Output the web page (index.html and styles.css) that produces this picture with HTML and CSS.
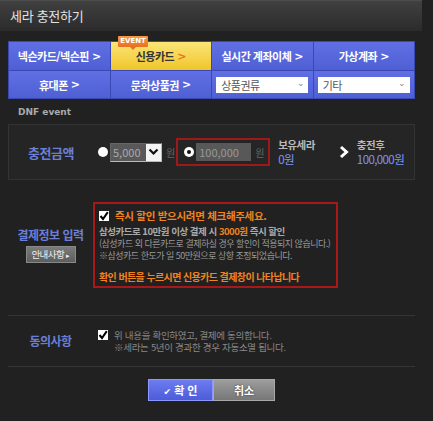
FILE: index.html
```html
<!DOCTYPE html>
<html lang="ko">
<head>
<meta charset="utf-8">
<title>세라 충전하기</title>
<link rel="stylesheet" href="styles.css">
</head>
<body>
<div class="win">
  <div class="titlebar">세라 충전하기</div>
  <div class="content">
    <div class="tabs-wrap">
      <div class="event-badge">EVENT</div>
      <div class="tabs">
        <div class="tab">넥슨카드/넥슨핀 <span class="chev">&gt;</span></div>
        <div class="tab active">신용카드 <span class="chev">&gt;</span></div>
        <div class="tab">실시간 계좌이체 <span class="chev">&gt;</span></div>
        <div class="tab">가상계좌 <span class="chev">&gt;</span></div>
        <div class="tab">휴대폰 <span class="chev">&gt;</span></div>
        <div class="tab">문화상품권 <span class="chev">&gt;</span></div>
        <div class="tab"><div class="sel"><span>상품권류</span><span class="sel-arrow">⌄</span></div></div>
        <div class="tab"><div class="sel"><span>기타</span><span class="sel-arrow">⌄</span></div></div>
      </div>
    </div>

    <div class="dnf">DNF event</div>

    <div class="amount-box">
      <div class="amount-label">충전금액</div>
      <span class="radio"></span>
      <div class="amt-select"><span class="amt-val">5,000</span><span class="amt-btn"><svg width="11" height="8" viewBox="0 0 11 8"><path d="M1.5 1.5 L5.5 5.5 L9.5 1.5" fill="none" stroke="#111" stroke-width="2.2"/></svg></span></div>
      <span class="won dim">원</span>
      <div class="red-sel">
        <span class="radio on"></span>
        <div class="amt-input">100,000</div>
        <span class="won dim">원</span>
      </div>
      <div class="info">
        <div class="info-t">보유세라</div>
        <div class="info-v">0원</div>
      </div>
      <svg class="arrow" width="10" height="14" viewBox="0 0 10 14"><path d="M2 2 L7.5 7 L2 12" fill="none" stroke="#fff" stroke-width="3"/></svg>
      <div class="info">
        <div class="info-t">충전후</div>
        <div class="info-v">100,000원</div>
      </div>
    </div>

    <div class="pay-section">
      <div class="side">
        <div class="side-label">결제정보 입력</div>
        <div class="guide-btn">안내사항 <span class="tri">▸</span></div>
      </div>
      <div class="notice">
        <div class="notice-head"><span class="chk"><svg width="10" height="10" viewBox="0 0 10 10"><path d="M1.5 5 L4 8 L8.8 1.2" fill="none" stroke="#000" stroke-width="2"/></svg></span><span class="orange b">즉시 할인 받으시려면 체크해주세요.</span></div>
        <div class="n-line b">삼성카드로 10만원 이상 결제 시 <span class="orange">3000원</span> 즉시 할인</div>
        <div class="n-line">(삼성카드 외 다른카드로 결제하실 경우 할인이 적용되지 않습니다.)</div>
        <div class="n-line">※삼성카드 한도가 일 50만원으로 상향 조정되었습니다.</div>
        <div class="n-line orange b last">확인 버튼을 누르시면 신용카드 결제창이 나타납니다</div>
      </div>
    </div>

    <div class="sep"></div>

    <div class="agree">
      <div class="side"><div class="side-label">동의사항</div></div>
      <div class="agree-body">
        <span class="chk"><svg width="10" height="10" viewBox="0 0 10 10"><path d="M1.5 5 L4 8 L8.8 1.2" fill="none" stroke="#000" stroke-width="2"/></svg></span>
        <div class="agree-text">
          <div>위 내용을 확인하였고, 결제에 동의합니다.</div>
          <div>※세라는 5년이 경과한 경우 자동소멸 됩니다.</div>
        </div>
      </div>
    </div>

    <div class="sep"></div>

    <div class="buttons">
      <div class="btn ok"><span class="ok-chk">✔</span> 확 인</div>
      <div class="btn cancel">취소</div>
    </div>
  </div>
</div>
</body>
</html>
```

FILE: styles.css
```css
* { box-sizing: border-box; }
html, body { margin: 0; padding: 0; }
body {
  background: #212121;
  font-family: "Noto Sans CJK KR", "Noto Sans", sans-serif;
  font-size: 11px;
  color: #999;
  width: 433px;
  height: 421px;
  overflow: hidden;
  white-space: nowrap;
}
.win { width: 422px; }
.titlebar {
  height: 31px;
  background: linear-gradient(#404040, #2b2b2b);
  border-top: 1px solid #4d4d4d;
  color: #e2e2e2;
  font-size: 13px;
  line-height: 30px;
  padding-left: 10px;
  letter-spacing: -0.3px;
}
.content { padding: 0 7px 0 8px; }

.tabs-wrap { position: relative; margin-top: 10px; }
.event-badge {
  position: absolute;
  left: 110px;
  top: -5px;
  width: 30px;
  height: 11px;
  background: linear-gradient(#f79a4a, #e8701f);
  color: #fff;
  font-family: "DejaVu Sans", sans-serif;
  font-size: 7px;
  font-weight: bold;
  line-height: 11px;
  text-align: center;
  border-radius: 1px;
  z-index: 2;
}
.event-badge::after {
  content: "";
  position: absolute;
  left: 12px;
  top: 11px;
  border: 3px solid transparent;
  border-top: 3px solid #e8701f;
}
.tabs {
  display: grid;
  grid-template-columns: repeat(4, 1fr);
  grid-template-rows: 28px 27px;
  gap: 1px;
  background: #3a48b4;
  border: 1px solid #3a48b4;
  width: 407px;
}
.tab {
  background: linear-gradient(#6070e4, #4f5fd4);
  color: #fff;
  font-weight: bold;
  font-size: 11px;
  display: flex;
  align-items: center;
  justify-content: center;
  letter-spacing: -0.5px;
  gap: 3px;
}
.tab .chev { font-family: "DejaVu Sans", sans-serif; font-size: 11px; }
.tab.active {
  background: linear-gradient(#fbe577, #f0c52a);
  color: #333;
}
.tab.active .chev { color: #e8761e; }
.sel {
  width: 92px;
  height: 16px;
  background: #fff;
  color: #555;
  font-weight: normal;
  font-size: 11px;
  display: flex;
  justify-content: space-between;
  align-items: center;
  padding: 0 4px 0 5px;
  line-height: 16px;
}
.sel-arrow { color: #888; font-size: 9px; line-height: 10px; padding-bottom: 4px; }

.dnf {
  margin: 7px 0 0 10px;
  font-family: "DejaVu Sans", sans-serif;
  font-size: 9px;
  font-weight: bold;
  color: #aaa;
  line-height: 13px;
}

.amount-box {
  margin-top: 5px;
  height: 56px;
  width: 407px;
  border: 1px solid #333;
  background: #252525;
  display: flex;
  align-items: center;
}
.amount-label {
  width: 70px;
  margin-left: 19px;
  color: #6a7fd8;
  font-size: 13px;
  font-weight: bold;
  letter-spacing: -0.5px;
}
.radio {
  width: 10px;
  height: 10px;
  border-radius: 50%;
  background: #fff;
  display: inline-block;
  flex: none;
  position: relative;
}
.radio.on::after {
  content: "";
  position: absolute;
  left: 3px; top: 3px;
  width: 4px; height: 4px;
  border-radius: 50%;
  background: #111;
}
.amt-select {
  margin-left: 2px;
  width: 52px;
  height: 19px;
  display: flex;
  flex: none;
  border: 1px solid #bbb;
  border-top-color: #666;
  border-left-color: #666;
}
.amt-val {
  flex: 1;
  background: #595959;
  color: #aaa;
  font-size: 11px;
  line-height: 17px;
  padding-left: 2px;
}
.amt-btn {
  width: 15px;
  background: #f4f4f4;
  display: flex;
  align-items: center;
  justify-content: center;
}
.won { margin-left: 4px; font-size: 10px; }
.dim { color: #666; }
.red-sel {
  margin-left: 1px;
  width: 94px;
  height: 28px;
  flex: none;
  border: 2px solid #9e1a1a;
  display: flex;
  align-items: center;
  padding-left: 6px;
}
.amt-input {
  margin-left: 2px;
  width: 55px;
  height: 18px;
  background: #585858;
  color: #999;
  font-size: 11px;
  line-height: 18px;
  padding-left: 3px;
}
.info { margin-left: 8px; line-height: 15px; flex: none; }
.info-t { color: #bbb; font-weight: bold; font-size: 10.5px; letter-spacing: -0.5px; }
.info-v { color: #7d98f6; font-size: 11.5px; letter-spacing: -0.6px; }
.arrow { margin: 0 8px 0 24px; flex: none; }
.arrow + .info { margin-left: 0; }

.pay-section {
  display: flex;
  align-items: center;
  padding: 22px 0 27px;
}
.side {
  width: 85px;
  display: flex;
  flex-direction: column;
  align-items: center;
  gap: 3px;
  flex: none;
}
.side-label {
  color: #6a7fd8;
  font-size: 12px;
  font-weight: bold;
  letter-spacing: -0.5px;
  line-height: 16px;
}
.guide-btn {
  width: 50px;
  height: 17px;
  background: linear-gradient(#7a7a7a, #5e5e5e);
  border: 1px solid #888;
  color: #eee;
  font-size: 9.5px;
  line-height: 15px;
  text-align: center;
  letter-spacing: -0.6px;
}
.guide-btn .tri { font-size: 7px; }
.notice {
  width: 245px;
  height: 86px;
  border: 2px solid #a81818;
  padding: 5px 0 0 4px;
  font-size: 9px;
  line-height: 12px;
  letter-spacing: -0.5px;
  color: #999;
}
.notice-head { display: flex; align-items: center; gap: 6px; margin-bottom: 3px; font-size: 10.5px; letter-spacing: -0.3px; line-height: 13px; }
.chk {
  width: 10px; height: 10px;
  background: #fff;
  display: inline-flex;
  flex: none;
}
.orange { color: #f0841f; }
.b { font-weight: bold; }
.n-line.b:not(.orange) { color: #aaa; font-size: 9.5px; letter-spacing: -0.5px; line-height: 13px; }
.n-line.last { margin-top: 9px; font-size: 10px; letter-spacing: -0.6px; }

.sep { height: 1px; background: #353535; width: 407px; }

.agree {
  display: flex;
  align-items: center;
  height: 50px;
}
.agree-body { display: flex; align-items: flex-start; gap: 6px; margin-left: 5px; }
.agree-body .chk { margin-top: 1px; }
.agree-text { font-size: 9.5px; line-height: 12.5px; color: #888; letter-spacing: -0.3px; }

.buttons {
  display: flex;
  justify-content: center;
  padding-top: 12px;
  width: 407px;
}
.btn {
  height: 22px;
  line-height: 20px;
  text-align: center;
  color: #fff;
  font-size: 11px;
  font-weight: bold;
}
.ok {
  width: 65px;
  background: linear-gradient(#6d7cf0, #4d5cd8);
  border: 1px solid #8a98ff;
}
.ok-chk { font-family: "DejaVu Sans", sans-serif; font-size: 9px; }
.cancel {
  width: 62px;
  background: linear-gradient(#9d9d9d, #777);
  border: 1px solid #a8a8a8;
  text-shadow: 0 0 2px #333;
}
```
